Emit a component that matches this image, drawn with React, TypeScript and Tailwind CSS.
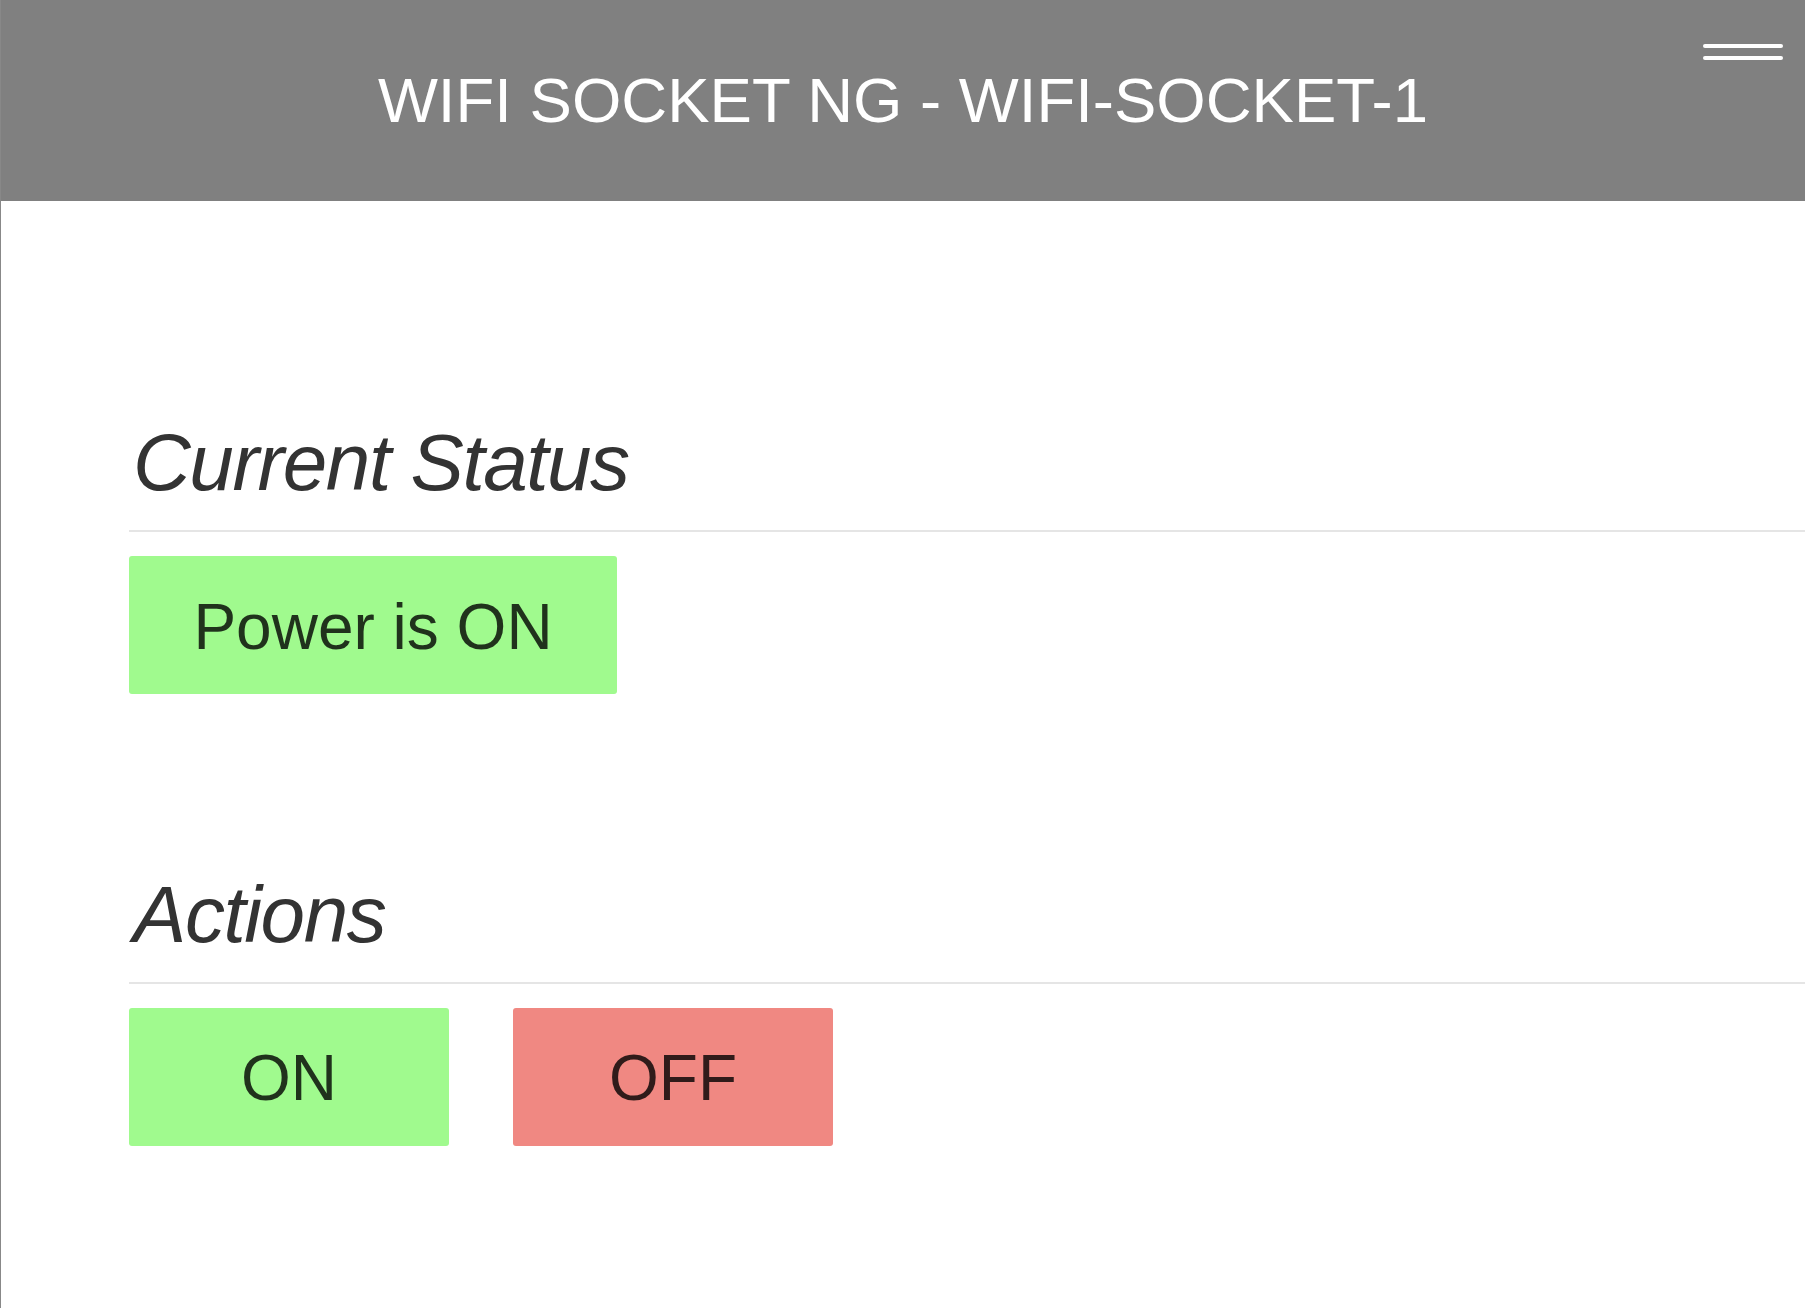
import React from "react";

export default function App() {
  const font = { fontFamily: '"Liberation Sans", Arial, Helvetica, sans-serif' };
  return (
    <div className="min-h-[1308px] w-full bg-white border-l border-[#888888] overflow-hidden" style={font}>
      <header className="relative h-[201px] bg-[#808080] flex items-center justify-center">
        <h1 className="text-white text-[63.5px] leading-none font-normal">
          WIFI SOCKET NG - WIFI-SOCKET-1
        </h1>
        <button className="absolute right-[22px] top-[44px] w-[80px] flex flex-col gap-[8px]" aria-label="menu">
          <span className="block h-[4px] w-full rounded-full bg-white" />
          <span className="block h-[4px] w-full rounded-full bg-white" />
        </button>
      </header>

      <main className="pl-[128px]">
        <section className="pt-[222px]">
          <h2 className="text-[80px] leading-[80px] italic font-normal text-[#333333] tracking-[-0.018em] pl-[4px]">
            Current Status
          </h2>
          <div className="mt-[27px] h-[2px] bg-[#e5e5e5]" />
          <div className="mt-[24px] flex">
            <div className="w-[488px] h-[138px] pt-[39px] rounded-[3px] bg-[#a0fa8e] text-[rgba(0,0,0,0.8)] text-[64px] leading-[64px] text-center">
              Power is ON
            </div>
          </div>
        </section>

        <section className="pt-[181px]">
          <h2 className="text-[80px] leading-[80px] italic font-normal text-[#333333] tracking-[-0.018em] pl-[4px]">
            Actions
          </h2>
          <div className="mt-[27px] h-[2px] bg-[#e5e5e5]" />
          <div className="mt-[24px] flex gap-[64px]">
            <button className="w-[320px] h-[138px] pt-[1px] rounded-[3px] bg-[#a0fa8e] text-[rgba(0,0,0,0.8)] text-[64px] leading-[64px] text-center">
              ON
            </button>
            <button className="w-[320px] h-[138px] pt-[1px] rounded-[3px] bg-[#f08882] text-[rgba(0,0,0,0.8)] text-[64px] leading-[64px] text-center">
              OFF
            </button>
          </div>
        </section>
      </main>
    </div>
  );
}
